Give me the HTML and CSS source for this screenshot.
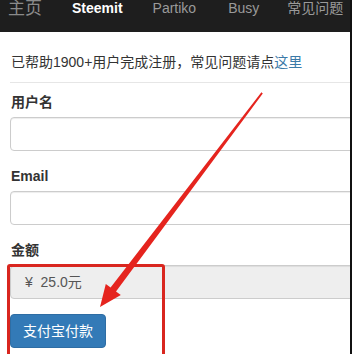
FILE: index.html
```html
<!DOCTYPE html>
<html lang="zh">
<head>
<meta charset="utf-8">
<link rel="stylesheet" href="styles.css">
</head>
<body>
<div class="page">
  <nav class="nav">
    <span class="nav-item home">主页</span>
    <span class="nav-item active">Steemit</span>
    <span class="nav-item">Partiko</span>
    <span class="nav-item busy">Busy</span>
    <span class="nav-item">常见问题</span>
  </nav>
  <main class="content">
    <p class="intro">已帮助1900+用户完成注册，常见问题请点<a class="link">这里</a></p>
    <hr class="rule">
    <div class="group">
      <label class="label">用户名</label>
      <div class="input"></div>
    </div>
    <div class="group">
      <label class="label">Email</label>
      <div class="input"></div>
    </div>
    <div class="group">
      <label class="label">金额</label>
      <div class="input readonly">¥&nbsp; 25.0元</div>
    </div>
    <button class="btn">支付宝付款</button>
  </main>
  <div class="highlight"></div>
  <svg class="arrow" width="352" height="354" viewBox="0 0 352 354">
    <polygon fill="#e5241e" points="261.4,92.2 262.8,93.4 116,291.5 120.8,295.1 100,307 105.8,283.9 110.6,287.5"/>
  </svg>
</div>
</body>
</html>
```

FILE: styles.css
```css
html, body {
  margin: 0;
  padding: 0;
  background: #fff;
}
.page {
  position: relative;
  width: 352px;
  height: 354px;
  overflow: hidden;
  box-sizing: border-box;
  border-right: 2px solid #111;
  font-family: "Liberation Sans", Arial, "Noto Sans CJK SC", sans-serif;
  font-size: 14px;
  color: #333;
}
.nav {
  height: 32px;
  background: #1e1e1e;
  display: flex;
  align-items: flex-start;
  padding-left: 8px;
  gap: 30px;
}
.nav-item {
  color: #9a9a9a;
  line-height: 16px;
  font-size: 14px;
  white-space: nowrap;
}
.nav-item.home {
  font-size: 17px;
  line-height: 18px;
  color: #8a8a8a;
}
.nav-item.active {
  color: #fff;
  font-weight: bold;
}
.nav-item.busy {
  margin-left: 2px;
  margin-right: -2px;
}
.content {
  padding: 20px 0 0 10px;
}
.intro {
  margin: 0 0 0 1px;
  line-height: 20px;
}
.link {
  color: #3b7aa8;
}
.rule {
  margin: 10px 0 9px 0;
  border: 0;
  border-top: 1px solid #e6e6e6;
  height: 0;
}
.group {
  margin-bottom: 15px;
}
.label {
  display: block;
  font-weight: bold;
  line-height: 20px;
  margin: 0 0 5px 1px;
  color: #333;
}
.input {
  height: 34px;
  box-sizing: border-box;
  border: 1px solid #ccc;
  border-radius: 4px;
  margin-right: -20px;
  background: #fff;
  box-shadow: inset 0 1px 1px rgba(0,0,0,0.075);
  padding: 6px 12px 6px 14px;
  line-height: 20px;
  color: #555;
}
.input.readonly {
  background: #eee;
}
.btn {
  display: block;
  height: 34px;
  box-sizing: border-box;
  background: #337ab7;
  border: 1px solid #2e6da4;
  border-radius: 4px;
  color: #fff;
  font-family: "Liberation Sans", Arial, "Noto Sans CJK SC", sans-serif;
  font-size: 14px;
  line-height: 20px;
  padding: 6px 12px;
  width: 96px;
}
.highlight {
  position: absolute;
  left: 7px;
  top: 264px;
  width: 158px;
  height: 110px;
  box-sizing: border-box;
  border: 3px solid #d9261f;
  border-radius: 3px;
}
.arrow {
  position: absolute;
  left: 0;
  top: 0;
}
```
